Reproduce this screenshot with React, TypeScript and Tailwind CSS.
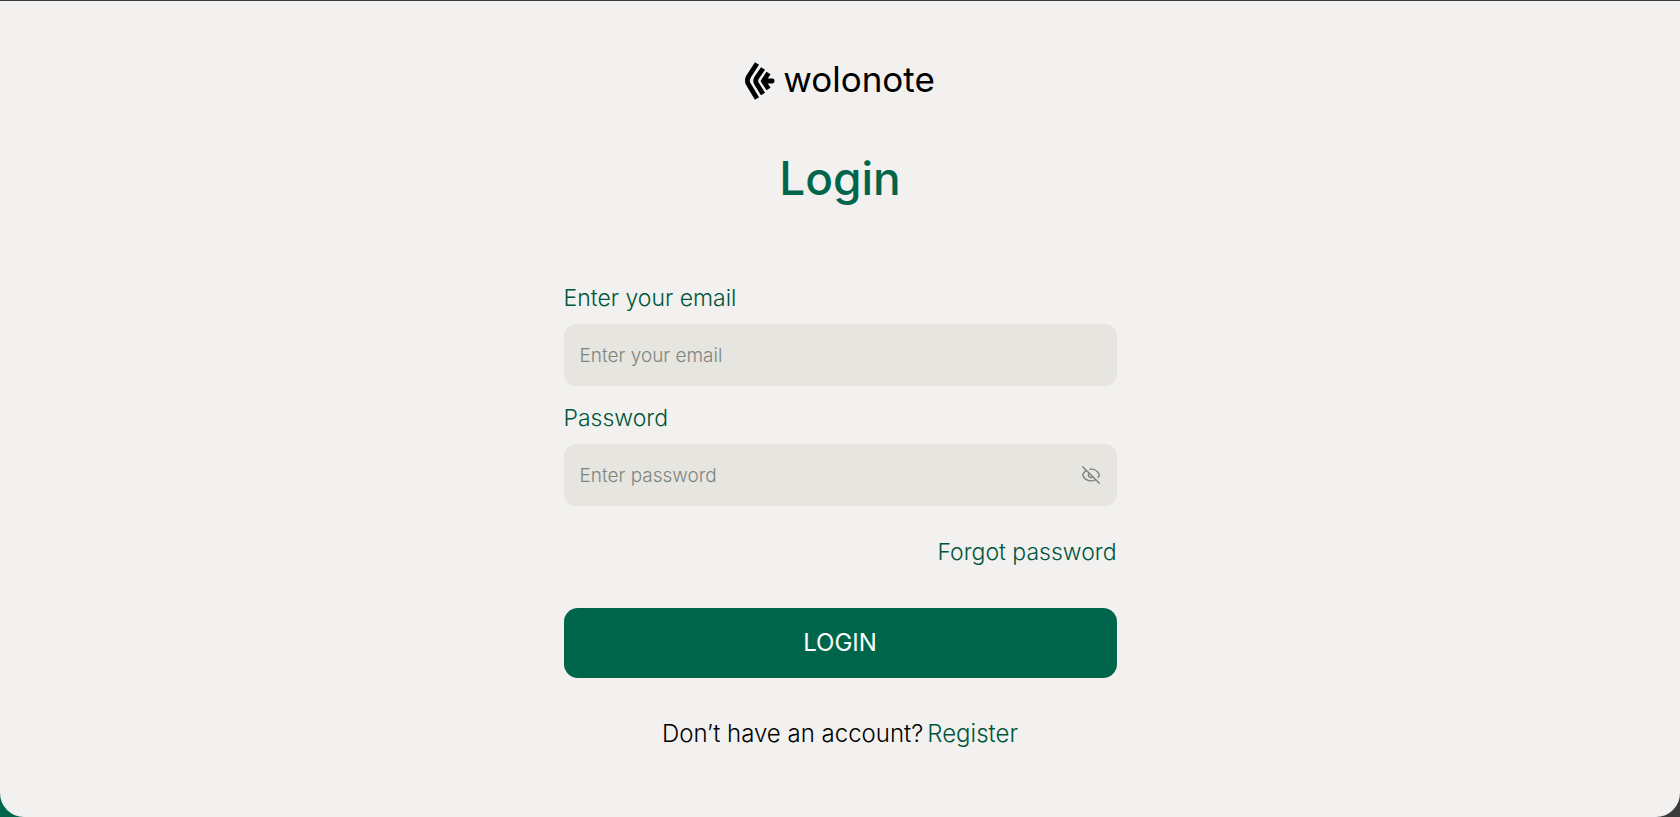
import { useState } from "react";
import { Eye, EyeOff } from "lucide-react";

const FIELD =
  "h-[62px] w-full rounded-xl bg-[#e6e5df] px-4 text-[19px] font-light text-gray-700 outline-none placeholder:text-[#7d8581]";
const LABEL = "mb-2.5 block text-[23px] leading-8 font-light text-[#00563b]";

function Logo() {
  return (
    <a href="#" className="flex items-center gap-2 text-black">
      <svg viewBox="0 0 30 38" className="h-[38px] w-[30px]" fill="none" stroke="currentColor" strokeWidth="4.8">
        <path d="M12 1.5 L3.6 14.5 Q1.2 19 3.6 22.5 L12 36.5" />
        <path d="M18 6.5 L11.8 15.5 Q9.6 19 11.8 22 L18 32" />
        <path d="M23.5 11 L18.4 19 L23.5 27" />
        <path d="M19 19 H27.2" strokeLinecap="round" />
      </svg>
      <span className="pb-1 text-[35px] leading-11">wolonote</span>
    </a>
  );
}

export default function App() {
  const [visible, setVisible] = useState(false);

  return (
    <div className="min-h-screen bg-linear-to-r from-[#00664b] to-[#3a3a3a]">
      <main className="flex min-h-screen flex-col items-center rounded-b-3xl border-t border-[#3a3a3a] bg-[#f2f1ef] px-6 pt-14 pb-10 font-['Inter',sans-serif]">
        <Logo />
        <h1 className="mt-[41px] text-[46px] leading-16 font-medium text-[#00664b]">Login</h1>

        <form className="mt-[72px] w-full max-w-[553px]" onSubmit={(e) => e.preventDefault()}>
          <label htmlFor="email" className={LABEL}>
            Enter your email
          </label>
          <input id="email" type="email" placeholder="Enter your email" className={FIELD} />

          <label htmlFor="password" className={`mt-4 ${LABEL}`}>
            Password
          </label>
          <div className="relative">
            <input
              id="password"
              type={visible ? "text" : "password"}
              placeholder="Enter password"
              className={FIELD}
            />
            <button
              type="button"
              aria-label="Toggle password visibility"
              onClick={() => setVisible(!visible)}
              className="absolute inset-y-0 right-4 text-[#7d8581]"
            >
              {visible ? <Eye size={20} strokeWidth={1.75} /> : <EyeOff size={20} strokeWidth={1.75} />}
            </button>
          </div>

          <div className="mt-[30px] flex justify-end">
            <a href="#" className="text-[23px] leading-8 font-light text-[#00563b]">
              Forgot password
            </a>
          </div>

          <button
            type="submit"
            className="mt-10 h-[70px] w-full rounded-[14px] bg-[#00664b] text-2xl text-white"
          >
            LOGIN
          </button>
        </form>

        <p className="mt-10 flex flex-wrap justify-center gap-x-1 text-2xl leading-8 font-light text-black">
          Don’t have an account?
          <a href="#" className="text-[#00563b]">
            Register
          </a>
        </p>
      </main>
    </div>
  );
}
